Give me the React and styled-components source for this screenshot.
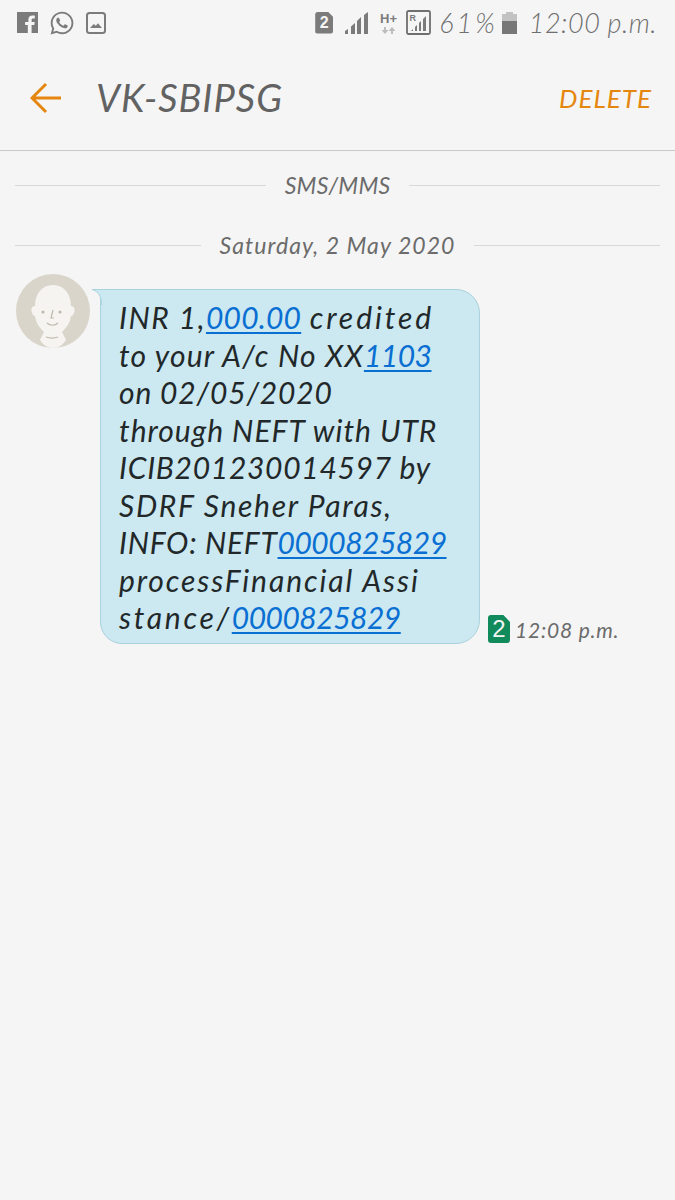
import React from "react";
import styled, { createGlobalStyle } from "styled-components";
import { FaWhatsapp } from "react-icons/fa";

const GlobalStyle = createGlobalStyle`
  html, body {
    margin: 0;
    padding: 0;
    background: #f5f5f5;
  }
`;

const Page = styled.div`
  width: 675px;
  height: 1200px;
  overflow: hidden;
  background: #f5f5f5;
  font-family: "Lato", "Liberation Sans", sans-serif;
  font-style: italic;
`;

const StatusBar = styled.div`
  height: 45px;
  padding: 0 18px 1px 17px;
  display: flex;
  align-items: center;
  color: #7b7b7b;
`;

const StatusGroup = styled.div`
  display: flex;
  align-items: center;
`;

const StatusItem = styled.span`
  display: flex;
  align-items: center;
  margin-left: ${({ $ml }) => $ml || 0}px;
`;

const Spacer = styled.div`
  flex: 1;
`;

const StatusText = styled.span`
  font-size: 27px;
  font-weight: 300;
  letter-spacing: ${({ $track }) => $track}px;
  color: #6f6f6f;
  white-space: nowrap;
`;

const Toolbar = styled.header`
  height: 104px;
  display: flex;
  align-items: center;
  padding: 0 23px 0 30px;
  border-bottom: 1px solid #c9c9c9;
`;

const Title = styled.h1`
  flex: 1;
  margin: 0 0 2px 34px;
  font-size: 38px;
  font-weight: 400;
  letter-spacing: 1px;
  color: #626262;
`;

const DeleteAction = styled.span`
  font-size: 26px;
  font-weight: 400;
  letter-spacing: 1px;
  color: #e5860f;
`;

const Divider = styled.div`
  height: 60px;
  margin-top: ${({ $first }) => ($first ? 4 : 0)}px;
  padding: 0 15px;
  display: flex;
  align-items: center;
  gap: 19px;
  font-size: 23px;
  color: #6b6b6b;
  letter-spacing: ${({ $track }) => $track}px;

  &::before,
  &::after {
    content: "";
    flex: 1;
    height: 1px;
    background: #d8d8d8;
  }
`;

const MessageRow = styled.div`
  display: flex;
  align-items: flex-end;
  margin-top: -1px;
  padding-left: 16px;
`;

const Avatar = styled.svg`
  width: 74px;
  height: 74px;
  align-self: flex-start;
  flex-shrink: 0;
`;

const Bubble = styled.div`
  position: relative;
  box-sizing: border-box;
  width: 380px;
  height: 355px;
  margin: 15px 0 0 10px;
  padding: 9px 0 0 18px;
  background: #cce8f0;
  border: 1px solid #a9d2dc;
  border-radius: 4px 24px 24px 22px;
`;

const BubbleTail = styled.svg`
  position: absolute;
  top: -1px;
  left: -9px;
  width: 12px;
  height: 16px;
`;

const MessageLine = styled.div`
  height: 37.5px;
  line-height: 37.5px;
  font-size: 30px;
  font-weight: 400;
  color: #22282a;
  white-space: nowrap;
  letter-spacing: ${({ $track }) => $track}px;
`;

const TextRun = styled.span`
  letter-spacing: ${({ $track }) => $track}px;
`;

const PhoneLink = styled.span`
  color: #0a6fd2;
  letter-spacing: ${({ $track }) => $track}px;
  text-decoration: underline;
  text-decoration-thickness: 2px;
  text-decoration-skip-ink: none;
  text-underline-offset: 3px;
`;

const MessageMeta = styled.div`
  display: flex;
  align-items: center;
  gap: 5px;
  margin-left: 8px;
  height: 30px;
`;

const SimBadge = styled.div`
  display: flex;
  align-items: center;
  justify-content: center;
  width: ${({ $size }) => $size}px;
  height: ${({ $tall }) => $tall}px;
  background: ${({ $color }) => $color};
  border-radius: 3px;
  clip-path: polygon(0 0, 70% 0, 100% 25%, 100% 100%, 0 100%);
  color: #f5f5f5;
  font-family: "Liberation Sans", sans-serif;
  font-style: normal;
  font-size: ${({ $font }) => $font}px;
  font-weight: ${({ $weight }) => $weight};
`;

const TimeText = styled.span`
  font-size: 21px;
  font-weight: 400;
  color: #6b6b6b;
  letter-spacing: 0.8px;
`;

function FacebookIcon() {
  return (
    <svg width="21" height="21" viewBox="0 0 21 21">
      <path
        fill="#7b7b7b"
        fillRule="evenodd"
        d="M0 0h21v21h-6.4v-8h2.7l.4-3.1h-3.1V8c0-.9.3-1.5 1.6-1.5h1.6V3.7c-.3 0-1.3-.1-2.4-.1-2.4 0-4 1.4-4 4.1v2.2H8.1V13h2.7v8H0z"
      />
    </svg>
  );
}

function GalleryIcon() {
  return (
    <svg width="20" height="22" viewBox="0 0 20 22">
      <rect x="1" y="1" width="18" height="20" rx="2.5" fill="none" stroke="#7b7b7b" strokeWidth="2" />
      <path fill="#7b7b7b" d="M4 16l3.8-4 2 1.8 2.2-2.6 4 4.8z" />
    </svg>
  );
}

function SignalIcon() {
  return (
    <svg width="23" height="22" viewBox="0 0 23 22">
      <path fill="#7b7b7b" d="M0 19l3-2v5H0zM6 14.5l4-3.5v11H6zM12 9l4-4v17h-4zM19 3l4-3v22h-4z" />
    </svg>
  );
}

function NetworkIcon() {
  return (
    <svg width="18" height="22" viewBox="0 0 18 22">
      <text x="0" y="11" fontFamily="Liberation Sans" fontStyle="normal" fontSize="13" fontWeight="700" fill="#7b7b7b">H+</text>
      <path fill="#bdbdbd" d="M5 22l-3.5-4H4v-3h2v3h2.500zM12 15l3.500 4H13v3h-2v-3H8.500z" />
    </svg>
  );
}

function RoamingIcon() {
  return (
    <svg width="25" height="25" viewBox="0 0 25 25">
      <rect x="1" y="1" width="23" height="23" rx="1.500" fill="none" stroke="#6f6f6f" strokeWidth="1.800" />
      <text x="3.500" y="11" fontFamily="Liberation Sans" fontStyle="normal" fontSize="9" fontWeight="700" fill="#7b7b7b">R</text>
      <path fill="#7b7b7b" d="M5 21l2-2v2zM9 21v-4l2-2v6zM13 21v-8l2-2v10zM17 21V9l3-3v15z" />
    </svg>
  );
}

function BatteryIcon() {
  return (
    <svg width="15" height="22" viewBox="0 0 15 22">
      <path fill="#c2c2c2" d="M4 0h7v2h4v9H0V2h4z" />
      <rect y="9" width="15" height="13" fill="#777" />
    </svg>
  );
}

function BackArrow() {
  return (
    <svg width="32" height="32" viewBox="0 0 32 32">
      <path fill="none" stroke="#e5860f" strokeWidth="3" d="M31 16H3M16 2L2 16l14 14" />
    </svg>
  );
}

function AvatarFace() {
  return (
    <Avatar viewBox="0 0 74 74">
      <circle cx="37" cy="37" r="37" fill="#dad5ca" />
      <path
        fill="#f5f4f1"
        d="M37 11c11 0 18 9 18 21 3 0 4 3 3.500 5-.5 3-2 5-3.500 5-1 8-6 13-9 16l4 8c-3 5-8 8-13 8s-10-3-13-8l4-8c-3-3-8-8-9-16-1.500 0-3-2-3.500-5-.5-2 .5-5 3.500-5 0-12 7-21 18-21z"
      />
      <circle cx="27" cy="38" r="1.600" fill="#bfb9ac" />
      <circle cx="44" cy="38" r="1.600" fill="#bfb9ac" />
      <path
        fill="none"
        stroke="#bfb9ac"
        strokeWidth="1.200"
        d="M37 36l-2 8h3M31 49c3 3 8 3 11 0M30 63c4 1.500 8 1.500 12 0"
      />
    </Avatar>
  );
}

export default function App() {
  return (
    <Page>
      <GlobalStyle />
      <StatusBar>
        <StatusGroup>
          <FacebookIcon />
          <StatusItem $ml={11}>
            <FaWhatsapp size={26} color="#7b7b7b" />
          </StatusItem>
          <StatusItem $ml={11}>
            <GalleryIcon />
          </StatusItem>
        </StatusGroup>
        <Spacer />
        <StatusGroup>
          <SimBadge $size={18} $tall={22} $color="#7b7b7b" $font={16} $weight={700}>2</SimBadge>
          <StatusItem $ml={12}>
            <SignalIcon />
          </StatusItem>
          <StatusItem $ml={12}>
            <NetworkIcon />
          </StatusItem>
          <StatusItem $ml={8}>
            <RoamingIcon />
          </StatusItem>
          <StatusItem $ml={8}>
            <StatusText $track={3}>61%</StatusText>
          </StatusItem>
          <StatusItem $ml={4}>
            <BatteryIcon />
          </StatusItem>
          <StatusItem $ml={12}>
            <StatusText $track={0.5}>12:00 p.m.</StatusText>
          </StatusItem>
        </StatusGroup>
      </StatusBar>

      <Toolbar>
        <BackArrow />
        <Title>VK-SBIPSG</Title>
        <DeleteAction>DELETE</DeleteAction>
      </Toolbar>

      <Divider $first $track={0.2}>SMS/MMS</Divider>
      <Divider $track={1.05}>Saturday, 2 May 2020</Divider>

      <MessageRow>
        <AvatarFace />
        <Bubble>
          <BubbleTail viewBox="0 0 12 16">
            <path fill="#cce8f0" d="M0 .5H12V16H9.500C9.500 7 6 2 0 .5z" />
            <path fill="none" stroke="#a9d2dc" d="M12 .5H0C6 2 9.500 7 9.500 16" />
          </BubbleTail>
          <MessageLine $track={1.5}>INR 1,<PhoneLink $track={0.2}>000.00</PhoneLink> <TextRun $track={2.9}>credited</TextRun></MessageLine>
          <MessageLine $track={1.2}>to your A/c No XX<PhoneLink $track={-0.5}>1103</PhoneLink></MessageLine>
          <MessageLine $track={0.85}>on 02/05/2020</MessageLine>
          <MessageLine $track={1}>through NEFT with UTR</MessageLine>
          <MessageLine $track={0.7}>ICIB201230014597 by</MessageLine>
          <MessageLine $track={1.7}>SDRF Sneher Paras,</MessageLine>
          <MessageLine $track={0.7}>INFO: NEFT<PhoneLink $track={-0.5}>0000825829</PhoneLink></MessageLine>
          <MessageLine $track={1.9}>processFinancial Assi</MessageLine>
          <MessageLine $track={2.7}>stance/<PhoneLink $track={-0.5}>0000825829</PhoneLink></MessageLine>
        </Bubble>
        <MessageMeta>
          <SimBadge $size={22} $tall={28} $color="#118a5c" $font={24} $weight={400}>2</SimBadge>
          <TimeText>12:08 p.m.</TimeText>
        </MessageMeta>
      </MessageRow>
    </Page>
  );
}
